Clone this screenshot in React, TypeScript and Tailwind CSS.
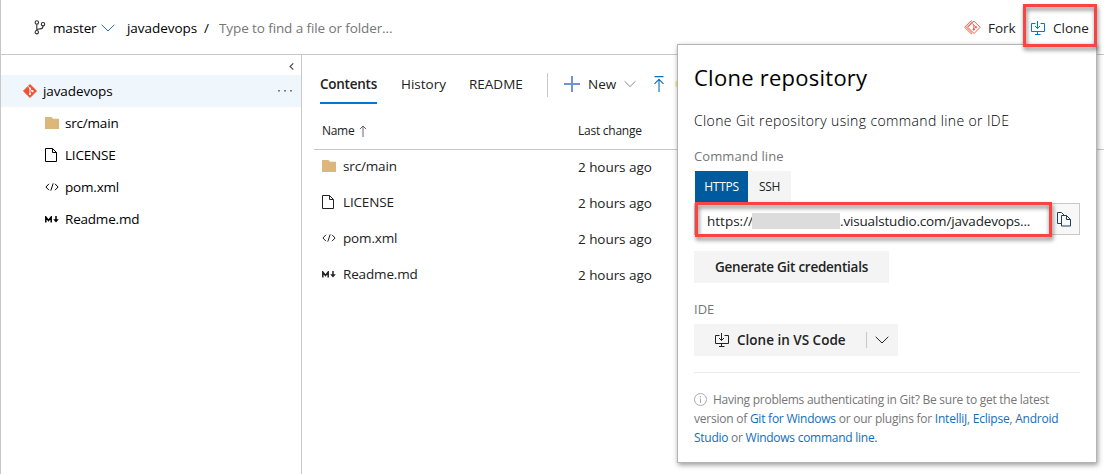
import React from "react";

type IconProps = { className?: string };

const BranchIcon = ({ className = "" }: IconProps) => (
  <svg width="12" height="15" viewBox="0 0 12 15" fill="none" stroke="currentColor" strokeWidth="1.1" className={className}>
    <circle cx="2.8" cy="2.5" r="1.7" />
    <circle cx="9" cy="4.2" r="1.7" />
    <circle cx="2.8" cy="12.2" r="1.7" />
    <path d="M2.8 4.2v6.3M9 5.9c0 2.4-1 3-3 3-1.900 0-3.200.5-3.200 1.600" />
  </svg>
);

const Chevron = ({ className = "" }: IconProps) => (
  <svg width="14" height="8" viewBox="0 0 14 8" fill="none" stroke="currentColor" strokeWidth="1" className={className}>
    <path d="M.7.8 7 7 13.300.8" />
  </svg>
);

const GitIcon = ({ className = "" }: IconProps) => (
  <svg width="14" height="14" viewBox="0 0 14 14" className={className}>
    <path d="M7 .4 13.600 7 7 13.600.4 7z" fill="#f1502f" stroke="#f1502f" strokeWidth=".8" strokeLinejoin="round" />
    <path d="M5 2.200 7 4.300v5.600M7 4.900l2.300 2.300" stroke="#fff" strokeWidth=".9" fill="none" />
    <circle cx="7" cy="4.600" r="1" fill="#fff" />
    <circle cx="7" cy="9.900" r="1.100" fill="#fff" />
    <circle cx="9.500" cy="7.200" r="1.100" fill="#fff" />
  </svg>
);

const ForkIcon = () => (
  <svg width="17" height="15" viewBox="0 0 17 15" fill="none" stroke="#f0604d" strokeWidth="1" strokeLinejoin="round">
    <path d="M10 1.200 16.200 7.300 10 13.500 3.800 7.300z" />
    <path d="M7.900 1.300 7.200.7.600 7.300l6.600 6.500.7-.6" />
    <path d="M8.400 1.600 2.400 7.300l6 5.700" strokeWidth=".8" />
    <path d="M8.400 3.400 9.800 5v4.500M10.200 5.400l1.800 1.800" />
    <circle cx="9.800" cy="9.400" r=".8" fill="#f0604d" />
    <circle cx="12" cy="7.300" r=".7" fill="#f0604d" />
  </svg>
);

const CloneIcon = ({ className = "" }: IconProps) => (
  <svg width="14" height="14" viewBox="0 0 14 14" fill="none" stroke="currentColor" strokeWidth="1" className={className}>
    <path d="M4.500 2.500h-4v8h13v-8h-4M6.500 0v7.500M4 5l2.500 2.500L9 5M6.500 10.500v3M4 13.500h5.500" />
  </svg>
);

const FolderIcon = () => (
  <svg width="14" height="12" viewBox="0 0 14 12">
    <path d="M0 0h6.500l1.500 1.800h6V12H0z" fill="#dcb67a" />
  </svg>
);

const FileIcon = () => (
  <svg width="12" height="14" viewBox="0 0 12 14" fill="none" stroke="currentColor" strokeWidth="1">
    <path d="M.5.5h7l4 4v9H.5zM7.500.5v4h4" />
  </svg>
);

const CodeIcon = () => (
  <svg width="14" height="8" viewBox="0 0 14 8" fill="none" stroke="currentColor" strokeWidth="1">
    <path d="M4 .8.9 4 4 7.200M10 .8 13.100 4 10 7.200M8.200.4 5.800 7.600" />
  </svg>
);

const MarkdownIcon = () => (
  <svg width="14" height="7" viewBox="0 0 14 7" fill="none" stroke="currentColor" strokeWidth="1.500">
    <path d="M.8 6.500V1L3.500 4.500 6.200 1v5.500M11 0v5" />
    <path d="M8.200 3.200h5.600L11 6.600z" fill="currentColor" stroke="none" />
  </svg>
);

const CopyIcon = () => (
  <svg width="14" height="15" viewBox="0 0 14 15" fill="none" stroke="currentColor" strokeWidth="1">
    <path d="M4.500 11.500h-4V.5h4l3 3M4.500 3.500h5l4 4v6.500h-9zM9.500 3.500v4h4" />
  </svg>
);

const files = [
  { name: "src/main", icon: <FolderIcon /> },
  { name: "LICENSE", icon: <FileIcon /> },
  { name: "pom.xml", icon: <CodeIcon /> },
  { name: "Readme.md", icon: <MarkdownIcon /> },
];

function Header() {
  return (
    <header className="flex h-[55px] shrink-0 items-center border-b border-[#c8c8c8] pb-px pl-[33px] pt-[2px] text-black">
      <BranchIcon className="text-[#333]" />
      <span className="ml-[7px] w-[48px] tracking-[-0.15px]">master</span>
      <Chevron className="text-[#2b6a9e]" />
      <span className="ml-[12px] w-[77px] tracking-[-0.05px]">javadevops</span>
      <span className="w-[15px]">/</span>
      <span className="tracking-[-0.1px] text-[#767676]">Type to find a file or folder...</span>
      <div className="ml-auto flex items-center pr-[15px] text-[#222]">
        <ForkIcon />
        <span className="ml-[7px] w-[43px]">Fork</span>
        <CloneIcon className="text-[#0078d4]" />
        <span className="ml-[8px] w-[36px]">Clone</span>
      </div>
    </header>
  );
}

function Sidebar() {
  return (
    <aside className="w-[301px] shrink-0 border-r border-[#c8c8c8] text-black">
      <div className="flex h-[20px] items-center justify-end pr-[7px] pt-[2px]">
        <svg width="5" height="7" viewBox="0 0 5 7" fill="none" stroke="#444" strokeWidth="1.100">
          <path d="M4.300.4 1.100 3.500l3.200 3.100" />
        </svg>
      </div>
      <div className="flex h-[32px] items-center bg-[#eff6fc] pl-[22px] pr-[9px]">
        <GitIcon />
        <span className="ml-[6px] tracking-[-0.1px]">javadevops</span>
        <svg width="14" height="2" viewBox="0 0 14 2" className="ml-auto" fill="#777">
          <path d="M0 0h2v1.500H0zM6 0h2v1.500H6zM12 0h2v1.500h-2z" />
        </svg>
      </div>
      {files.map((f) => (
        <div key={f.name} className="flex h-[32px] items-center pl-[44px]">
          <span className="flex w-[20px]">{f.icon}</span>
          <span className="tracking-[-0.2px]">{f.name}</span>
        </div>
      ))}
    </aside>
  );
}

function Contents() {
  return (
    <main className="min-w-0 flex-1 pl-[12px] pt-[9px] text-[#222]">
      <nav className="flex h-[40px] items-stretch pl-[6px]">
        <span className="flex w-[57px] items-center border-b-2 border-[#0078d4] pt-[2px] font-semibold tracking-[-0.25px]">Contents</span>
        <span className="ml-[24px] flex w-[68px] items-center">History</span>
        <span className="flex w-[78px] items-center">README</span>
        <span className="mt-[9px] h-[24px] w-px bg-[#c8c8c8]" />
        <div className="flex items-center pl-[16px]">
          <svg width="16" height="16" viewBox="0 0 16 16" stroke="#6f95d8" strokeWidth="2">
            <path d="M8 0v16M0 8h16" />
          </svg>
          <span className="ml-[8px] w-[36px]">New</span>
          <Chevron className="w-[12px] text-[#777]" />
          <svg width="12" height="16" viewBox="0 0 12 16" fill="none" stroke="#106ebe" strokeWidth="1.100" className="ml-[17px]">
            <path d="M1.500.6h9M6 16V3.500M1.500 7.800 6 3.300 10.500 7.800" />
          </svg>
          <span className="ml-[10px] h-[8px] w-[8px] shrink-0 rounded-full bg-[#f1ef9a]" />
        </div>
      </nav>
      <div className="flex h-[46px] items-center border-b border-[#c8c8c8] pl-[8px] pt-[9px] text-[12px]">
        <span className="w-[37px] tracking-[-0.3px]">Name</span>
        <svg width="8" height="12" viewBox="0 0 8 12" fill="none" stroke="#666" strokeWidth="1">
          <path d="M4 12V1M1 4l3-3 3 3" />
        </svg>
        <span className="ml-[211px] tracking-[-0.25px]">Last change</span>
      </div>
      {files.map((f) => (
        <div key={f.name} className="flex h-[36px] items-center pb-[4px] pl-[8px]">
          <span className="flex w-[21px]">{f.icon}</span>
          <span className="w-[235px] tracking-[-0.15px]">{f.name}</span>
          <span className="pt-[2px] tracking-[-0.05px]">2 hours ago</span>
        </div>
      ))}
    </main>
  );
}

const Link = ({ children }: { children: React.ReactNode }) => <a className="text-[#106ebe]">{children}</a>;

function ClonePanel() {
  return (
    <section className="absolute left-[676px] top-[44px] h-[419px] w-[420px] border border-[#b4b4b4] bg-white px-[16px] text-[#222] shadow-[1px_2px_5px_rgba(0,0,0,0.4)]">
      <h1 className="h-[30px] pt-[17px] text-[22px] leading-[30px] tracking-[0.25px] text-black">Clone repository</h1>
      <p className="mt-[36px] text-[14px] font-light leading-[20px] tracking-[0.38px] text-black">Clone Git repository using command line or IDE</p>
      <p className="mt-[15px] text-[13px] leading-[20px] tracking-[0.1px] text-[#767676]">Command line</p>
      <div className="mt-[5px] flex h-[32px] pl-px text-[12px] tracking-[-0.3px]">
        <span className="flex w-[53px] items-center justify-center bg-[#005a9e] text-white">HTTPS</span>
        <span className="flex w-[43px] items-center justify-center bg-[#f4f4f4]">SSH</span>
      </div>
      <div className="relative flex h-[32px] w-[386px] border border-[#c8c8c8]">
        <div className="flex flex-1 items-center pl-[12px] pt-[3px]">
          <span className="w-[45px]">https://</span>
          <span className="h-[16px] w-[88px] bg-[#dcdcdc]" />
          <span className="tracking-[-0.17px]">.visualstudio.com/javadevops...</span>
        </div>
        <div className="flex w-[33px] items-center bg-[#f8f8f8] pl-[11px] text-[#1f3f60]">
          <CopyIcon />
        </div>
        <div className="absolute left-0 top-[-2px] h-[35px] w-[357px] border-3 border-[#fa4343] drop-shadow-[1px_3px_2px_rgba(0,0,0,0.5)]" />
      </div>
      <div className="mt-[16px] flex h-[32px] w-[195px] items-center justify-center bg-[#f4f4f4] font-semibold tracking-[-0.25px]">Generate Git credentials</div>
      <p className="mt-[16px] text-[13px] leading-[20px] text-[#767676]">IDE</p>
      <div className="mt-[5px] flex h-[32px] w-[204px] items-center bg-[#f4f4f4] pl-[21px]">
        <CloneIcon />
        <span className="ml-[8px] w-[129px] font-semibold">Clone in VS Code</span>
        <span className="h-[16px] w-px bg-[#c8c8c8]" />
        <Chevron className="ml-[8px]" />
      </div>
      <div className="mt-[16px] h-px w-[386px] bg-[#eaeaea]" />
      <div className="mt-[17px] whitespace-nowrap text-[12px] leading-[19px] tracking-[-0.26px] text-[#767676]">
        <div className="flex items-center">
          <svg width="13" height="13" viewBox="0 0 13 13" fill="none" stroke="#aaa" className="mr-[6px]">
            <circle cx="6.500" cy="6.500" r="6" />
            <path d="M6.500 5.500V10M6.500 3v1.300" />
          </svg>
          <span>Having problems authenticating in Git? Be sure to get the latest</span>
        </div>
        <div className="tracking-[-0.235px]">version of <Link>Git for Windows</Link> or our plugins for <Link>IntelliJ</Link>, <Link>Eclipse</Link>, <Link>Android</Link></div>
        <div><Link>Studio</Link> or <Link>Windows command line.</Link></div>
      </div>
    </section>
  );
}

export default function App() {
  return (
    <div className="relative flex h-[474px] w-[1104px] flex-col overflow-hidden border-l border-[#c8c8c8] bg-white font-['Open_Sans','Noto_Sans',sans-serif] text-[13.5px] leading-[20px] whitespace-nowrap">
      <Header />
      <div className="flex min-h-0 flex-1">
        <Sidebar />
        <Contents />
      </div>
      <ClonePanel />
      <div className="absolute left-[1022px] top-[4px] h-[43px] w-[74px] border-3 border-[#fa4343] drop-shadow-[1px_3px_2px_rgba(0,0,0,0.5)]" />
    </div>
  );
}
